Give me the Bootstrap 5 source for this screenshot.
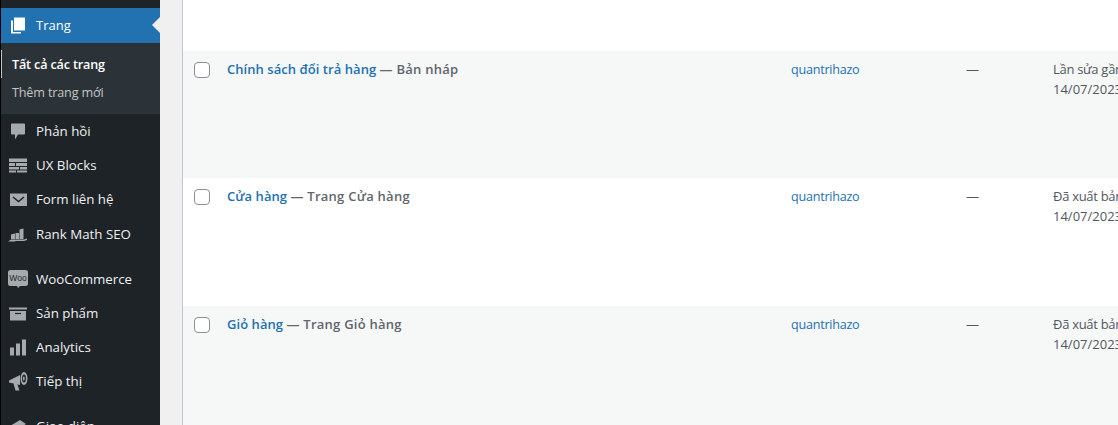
<!DOCTYPE html>
<html lang="vi">
<head>
  <meta charset="UTF-8">
  <title>Trang</title>
  <link href="https://cdn.jsdelivr.net/npm/bootstrap@5.3.3/dist/css/bootstrap.min.css" rel="stylesheet">
  <style>
    html, body { height: 425px; overflow: hidden; }
    body { background: #f0f0f1; font-family: "Open Sans", "Noto Sans", sans-serif; font-size: 13px; color: #50575e; }
    .adm-side { width: 160px; height: 425px; background: #1d2327; border-left: 1px solid #000; padding-top: 8px; flex: none; overflow: hidden; }
    .adm-item { height: 34px; padding: 1px 0 0 7px; color: #f0f0f1; text-decoration: none; font-size: 13.3px; }
    .adm-tall { height: 35px; padding-top: 2px; }
    .adm-item svg { width: 20px; height: 20px; flex: none; fill: #a7aaad; margin-right: 8px; }
    .adm-active { height: 35px; padding-top: 0; background: #2271b1; color: #fff; position: relative; font-size: 13px; }
    .adm-active svg { fill: #fff; }
    .adm-active::after { content: ""; position: absolute; right: 0; top: 9px; border: 8px solid transparent; border-right-color: #f0f0f1; border-left-width: 0; }
    .adm-sub { height: 71px; background: #2c3338; padding-top: 7px; }
    .adm-sub a { display: block; height: 28px; line-height: 30px; padding-left: 11px; font-size: 12.6px; letter-spacing: -.15px; color: #c3c4c7; text-decoration: none; }
    .adm-sub a.adm-cur { color: #fff; font-weight: 600; margin-left: -1px; padding-left: 10px; border-left: 2px solid #c3c4c7; }
    .adm-gap { height: 11px; }
    .adm-main { margin-left: 22px; flex: 1; min-width: 0; border-left: 1px solid #c3c4c7; overflow: hidden; }
    .adm-top { height: 51px; background: #fff; }
    .adm-row { height: 128px; padding-top: 9px; background: #fff; }
    .adm-alt { background: #f6f7f7; }
    .adm-short { height: 127px; }
    .adm-check { width: 16px; height: 16px; margin: 2px 0 0 11px; border: 1px solid #8c8f94; border-radius: 4px; background: #fff; flex: none; }
    .adm-title { width: 564px; margin-left: 17px; flex: none; line-height: 19px; }
    .adm-title a { color: #2271b1; font-weight: 600; text-decoration: none; letter-spacing: .05px; }
    .adm-title b { font-weight: 600; color: #5f666d; letter-spacing: .25px; }
    .adm-author { width: 175px; flex: none; line-height: 19px; color: #2271b1; font-size: 12.6px; letter-spacing: -.25px; }
    .adm-tag { width: 87px; flex: none; line-height: 19px; }
    .adm-date { white-space: nowrap; line-height: 19.5px; }
    .adm-date span { letter-spacing: -.3px; }
    .adm-woo { font: 400 8.5px "Liberation Sans", sans-serif; fill: #1d2327; }
  </style>
</head>
<body class="d-flex">
  <nav class="adm-side">
    <a class="adm-item adm-active d-flex align-items-center" href="#">
      <svg viewBox="0 0 20 20"><path d="M6 1.500h11v13H6z"/><path d="M3 4.500h2V16h8v1.500H3z"/></svg>Trang
    </a>
    <div class="adm-sub">
      <a class="adm-cur" href="#">Tất cả các trang</a>
      <a href="#">Thêm trang mới</a>
    </div>
    <a class="adm-item d-flex align-items-center" href="#">
      <svg viewBox="0 0 20 20"><path d="M4 1.500h12a1 1 0 0 1 1 1v9a1 1 0 0 1-1 1h-6l-3 5v-5H4a1 1 0 0 1-1-1v-9a1 1 0 0 1 1-1z"/></svg>Phản hồi
    </a>
    <a class="adm-item d-flex align-items-center" href="#">
      <svg viewBox="0 0 20 20"><path d="M1 2.500h18v3.500H1zM1 7h6v3H1zM8 7h11v3H8zM1 11h10v2.500H1zM12 11h7v2.500h-7zM1 14.500h7V16.500H1zM9 14.500h10V16.500H9z"/></svg>UX Blocks
    </a>
    <a class="adm-item d-flex align-items-center" href="#">
      <svg viewBox="0 0 20 20"><path d="M2 3.500h17V16H2z"/><path d="M5 7l5.500 4.500L16 7" fill="none" stroke="#1d2327" stroke-width="1.500"/></svg>Form liên hệ
    </a>
    <a class="adm-item adm-tall d-flex align-items-center" href="#">
      <svg viewBox="0 0 20 20"><path d="M3 9.500l4-1V14H3zM7.500 8h3.500v6H7.500zM11.500 4.500l4-1V14h-4zM0 16.500L3 14.500h13l3-1v1.500l-3 1H8l-1.500.500z"/></svg>Rank Math SEO
    </a>
    <div class="adm-gap"></div>
    <a class="adm-item d-flex align-items-center" href="#">
      <svg viewBox="0 0 20 20"><path d="M2.500 0h15A2.500 2.500 0 0 1 20 2.500v11a2.500 2.500 0 0 1-2.500 2.500H12l-2 2-1-2H2.500A2.500 2.500 0 0 1 0 13.500v-11A2.500 2.500 0 0 1 2.500 0z"/><text class="adm-woo" x="10" y="11" text-anchor="middle">Woo</text></svg>WooCommerce
    </a>
    <a class="adm-item d-flex align-items-center" href="#">
      <svg viewBox="0 0 20 20"><path d="M1 3.500h18v2H1z"/><path d="M2 7h16v9.500H2z"/><path d="M7 9.500h6" stroke="#1d2327" stroke-width="1.200"/></svg>Sản phẩm
    </a>
    <a class="adm-item d-flex align-items-center" href="#">
      <svg viewBox="0 0 20 20"><path d="M2 9.500h4v8H2zM8 5.500h4v12H8zM14 1.500h4v16h-4z"/></svg>Analytics
    </a>
    <a class="adm-item d-flex align-items-center" href="#">
      <svg viewBox="0 0 20 20"><path d="M1 8.500L12 3v10L1 10.500zM5.500 11.500l4 1 2 6H7.500z"/><ellipse cx="16" cy="6.500" rx="3.500" ry="6.500"/><ellipse cx="16" cy="6.500" rx="1.900" ry="4" fill="#1d2327"/><ellipse cx="15.800" cy="6.500" rx=".9" ry="2"/></svg>Tiếp thị
    </a>
    <div class="adm-gap"></div>
    <a class="adm-item d-flex align-items-center" href="#">
      <svg viewBox="0 0 20 20"><path d="M2 9l10-6 6 4-10 6z"/><path d="M7 14l11-6v3l-9 7z"/></svg>Giao diện
    </a>
  </nav>

  <main class="adm-main">
    <div class="adm-top"></div>
    <div class="adm-row adm-alt adm-short d-flex">
      <span class="adm-check"></span>
      <div class="adm-title"><a href="#">Chính sách đổi trả hàng</a> <b>— Bản nháp</b></div>
      <div class="adm-author">quantrihazo</div>
      <div class="adm-tag">—</div>
      <div class="adm-date"><span>Lần sửa gần nhất</span><br>14/07/2023</div>
    </div>
    <div class="adm-row d-flex">
      <span class="adm-check"></span>
      <div class="adm-title"><a href="#">Cửa hàng</a> <b>— Trang Cửa hàng</b></div>
      <div class="adm-author">quantrihazo</div>
      <div class="adm-tag">—</div>
      <div class="adm-date"><span>Đã xuất bản</span><br>14/07/2023</div>
    </div>
    <div class="adm-row adm-alt d-flex">
      <span class="adm-check"></span>
      <div class="adm-title"><a href="#">Giỏ hàng</a> <b>— Trang Giỏ hàng</b></div>
      <div class="adm-author">quantrihazo</div>
      <div class="adm-tag">—</div>
      <div class="adm-date"><span>Đã xuất bản</span><br>14/07/2023</div>
    </div>
  </main>

  <script src="https://cdn.jsdelivr.net/npm/bootstrap@5.3.3/dist/js/bootstrap.bundle.min.js"></script>
</body>
</html>
